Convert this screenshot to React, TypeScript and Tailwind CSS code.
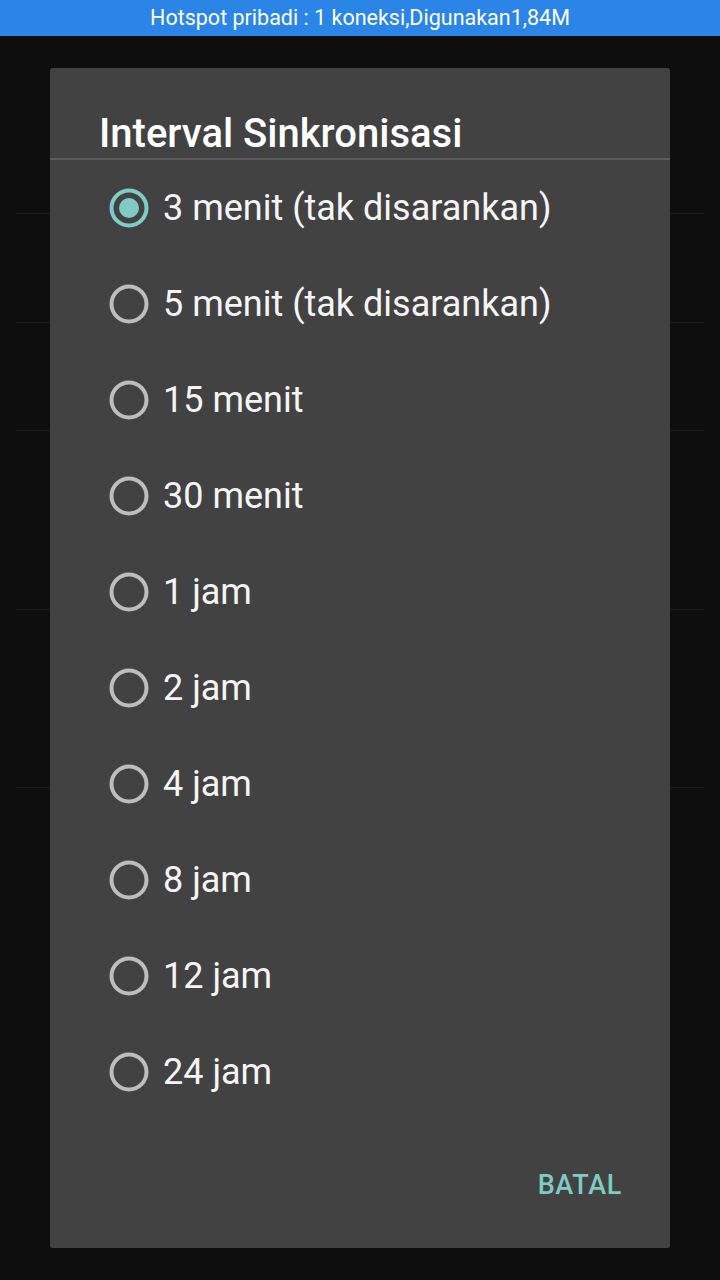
const options = [
  '3 menit (tak disarankan)',
  '5 menit (tak disarankan)',
  '15 menit',
  '30 menit',
  '1 jam',
  '2 jam',
  '4 jam',
  '8 jam',
  '12 jam',
  '24 jam',
]

// faint list separators of the settings page behind the dialog
const bgLines = [213, 322, 430, 609, 787]

function Radio({ checked }: { checked: boolean }) {
  return (
    <svg width="40" height="40" viewBox="0 0 40 40" className="shrink-0">
      <circle
        cx="20"
        cy="20"
        r="17.5"
        fill="none"
        stroke={checked ? '#80cbc4' : '#bdbdbd'}
        strokeWidth="4"
      />
      {checked && <circle cx="20" cy="20" r="10" fill="#80cbc4" />}
    </svg>
  )
}

export default function App() {
  return (
    <div
      className="relative w-[720px] h-[1280px] bg-[#0e0e0e] overflow-hidden"
      style={{ fontFamily: 'Roboto, "Noto Sans", sans-serif' }}
    >
      {/* Status bar */}
      <div className="h-9 bg-[#2a85e6] flex items-center justify-center text-white text-[21.5px]">
        Hotspot pribadi : 1 koneksi,Digunakan1,84M
      </div>

      {bgLines.map((y) => (
        <div
          key={y}
          className="absolute left-4 right-4 h-px bg-[#1b1b1b]"
          style={{ top: y }}
        />
      ))}

      {/* Dialog */}
      <div className="relative mt-8 mx-[50px] h-[1180px] bg-[#424242] rounded-[3px] flex flex-col">
        <div className="h-[90px] flex items-end pl-[49px] pb-[4px]">
          <h1 className="text-[40px] font-medium text-white leading-none">
            Interval Sinkronisasi
          </h1>
        </div>
        <div className="h-[2px] bg-[#5c5c5c]" />

        <div className="flex flex-col">
          {options.map((label, i) => (
            <div key={label} className="h-24 flex items-center pl-[59px] gap-[14px]">
              <Radio checked={i === 0} />
              <span className="text-[36px] text-[#f5f5f5] leading-none">{label}</span>
            </div>
          ))}
        </div>

        <div className="flex-1 flex items-center justify-end pr-[48px] pt-[2px]">
          <span className="text-[27px] font-medium text-[#80cbc4] tracking-wide">BATAL</span>
        </div>
      </div>
    </div>
  )
}
